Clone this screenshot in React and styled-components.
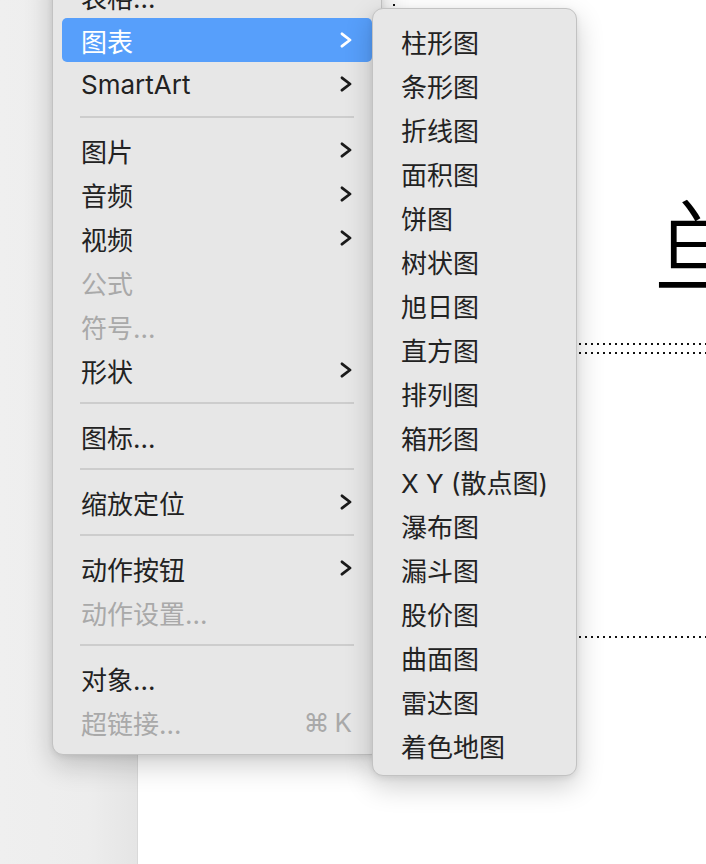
import React from "react";
import styled, { createGlobalStyle } from "styled-components";

const GlobalStyle = createGlobalStyle`
  html, body {
    margin: 0;
    padding: 0;
    overflow: hidden;
  }

  body {
    font-family: Inter, "Noto Sans CJK SC", "Noto Sans", sans-serif;
    -webkit-font-smoothing: antialiased;
  }
`;

const Window = styled.div`
  display: flex;
  height: 100vh;
  position: relative;
  overflow: hidden;
`;

const Sidebar = styled.div`
  background: linear-gradient(to right, #efefef 0, #ededed 88px, #e5e5e5 136px);
  border-right: 1px solid #d9d9d9;
  flex: 0 0 137px;
`;

const Canvas = styled.div`
  background: #fff;
  flex: 1;
  position: relative;
`;

const dots = (dir) => `linear-gradient(${dir}, #111 2px, transparent 2px)`;

const Placeholder = styled.div`
  position: absolute;
  left: ${(props) => props.$left}px;
  top: ${(props) => props.$top}px;
  width: 700px;
  height: ${(props) => props.$height}px;
  background:
    ${dots("to right")} left top / 6px 2px repeat-x,
    ${dots("to right")} left bottom / 6px 2px repeat-x,
    ${dots("to bottom")} left top / 2px 6px repeat-y;
`;

const TitleText = styled.div`
  color: #000;
  font-family: "Noto Sans CJK SC", sans-serif;
  font-size: 122px;
  font-weight: 300;
  line-height: 122px;
  margin: 267px 0 0 259px;
  white-space: nowrap;
`;

const Menu = styled.div`
  background: #e7e7e7;
  border: 1px solid #c2c2c2;
  border-radius: 11px;
  box-shadow: 0 10px 28px rgba(0, 0, 0, 0.2), 0 2px 6px rgba(0, 0, 0, 0.08);
  box-sizing: border-box;
  display: flex;
  flex-direction: column;
  left: ${(props) => props.$left}px;
  padding: ${(props) => props.$padding};
  position: absolute;
  top: ${(props) => props.$top}px;
  width: ${(props) => props.$width}px;
`;

const Item = styled.div`
  align-items: center;
  background: ${(props) => (props.$active ? "#579ffb" : "transparent")};
  border-radius: 5px;
  color: ${(props) =>
    props.$active ? "#fff" : props.$disabled ? "#a9a9a9" : "#222"};
  display: flex;
  font-size: 26px;
  height: 44px;
  justify-content: space-between;
  padding: 0 20px 0 19px;
  white-space: nowrap;
`;

const Separator = styled.div`
  align-items: center;
  display: flex;
  height: 22px;
  padding: 0 18px;

  &::after {
    background: #cdcdcd;
    content: "";
    flex: 1;
    height: 2px;
  }
`;

const Shortcut = styled.span`
  color: #a9a9a9;
  display: flex;
  gap: 5px;
  font-size: 26px;
`;

const Chevron = ({ color }) => (
  <svg width="12" height="16" viewBox="0 0 12 16">
    <polyline
      points="2,1.8 10,8 2,14.2"
      fill="none"
      stroke={color}
      strokeWidth="2.8"
      strokeLinecap="round"
      strokeLinejoin="round"
    />
  </svg>
);

const mainItems = [
  { label: "表格..." },
  { label: "图表", sub: true, active: true },
  { label: "SmartArt", sub: true },
  { sep: true },
  { label: "图片", sub: true },
  { label: "音频", sub: true },
  { label: "视频", sub: true },
  { label: "公式", disabled: true },
  { label: "符号...", disabled: true },
  { label: "形状", sub: true },
  { sep: true },
  { label: "图标..." },
  { sep: true },
  { label: "缩放定位", sub: true },
  { sep: true },
  { label: "动作按钮", sub: true },
  { label: "动作设置...", disabled: true },
  { sep: true },
  { label: "对象..." },
  { label: "超链接...", disabled: true, shortcut: true },
];

const chartItems = [
  "柱形图",
  "条形图",
  "折线图",
  "面积图",
  "饼图",
  "树状图",
  "旭日图",
  "直方图",
  "排列图",
  "箱形图",
  "X Y (散点图)",
  "瀑布图",
  "漏斗图",
  "股价图",
  "曲面图",
  "雷达图",
  "着色地图",
];

const App = () => (
  <>
    <GlobalStyle />
    <Window>
      <Sidebar />
      <Canvas>
        <Placeholder $left={255} $top={-80} $height={425}>
          <TitleText>单击此处添加标题</TitleText>
        </Placeholder>
        <Placeholder $left={255} $top={352} $height={286} />
      </Canvas>

      <Menu $left={52} $top={-36} $width={330} $padding="9px 9px 10px">
        {mainItems.map((item, i) =>
          item.sep ? (
            <Separator key={i} />
          ) : (
            <Item key={i} $active={item.active} $disabled={item.disabled}>
              <span>{item.label}</span>
              {item.sub && <Chevron color={item.active ? "#fff" : "#1a1a1a"} />}
              {item.shortcut && (
                <Shortcut>
                  <span>⌘</span>
                  <span>K</span>
                </Shortcut>
              )}
            </Item>
          )
        )}
      </Menu>

      <Menu $left={372} $top={8} $width={205} $padding="10px 9px 8px">
        {chartItems.map((label) => (
          <Item key={label}>
            <span>{label}</span>
          </Item>
        ))}
      </Menu>
    </Window>
  </>
);

export default App;
